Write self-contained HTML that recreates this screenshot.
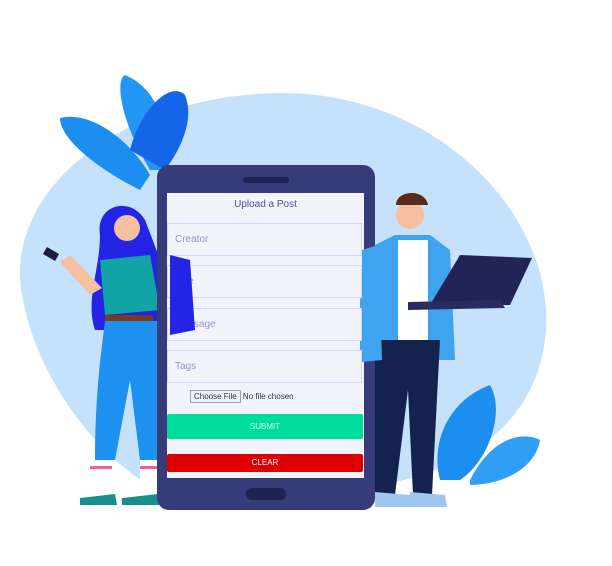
<!DOCTYPE html>
<html><head><meta charset="utf-8"><style>
html,body{margin:0;padding:0;background:#fff;width:612px;height:566px;overflow:hidden;font-family:"Liberation Sans",sans-serif}
.abs{position:absolute}
.f{position:absolute;left:167px;width:195px;background:#f2f4fb;border:1px solid #cfd6f5;box-sizing:border-box;color:#8f97c9;font-size:10px;padding-left:7px}
</style></head><body>
<svg class="abs" style="left:0;top:0" width="612" height="566">
<path d="M20 280 C15 180 130 95 280 93 C440 92 560 220 545 340 C535 420 470 470 380 485 L160 490 C110 470 30 380 20 280Z" fill="#c5e1fb"/>
<path d="M140 190 C100 170 60 140 60 118 C90 110 130 140 150 175Z" fill="#1c8ef0"/>
<path d="M150 170 C120 120 115 80 125 75 C160 90 170 130 160 170Z" fill="#2196f3"/>
<path d="M130 150 C140 110 170 80 185 95 C195 120 180 150 165 170Z" fill="#1565e8"/>
<path d="M440 480 C430 440 450 400 490 385 C505 410 490 460 460 480Z" fill="#1c8ef0"/>
<path d="M470 480 C490 440 520 430 540 440 C535 470 500 485 470 485Z" fill="#2f9ef4"/>
<path d="M100 235 C95 205 130 195 145 220 C160 260 175 290 165 330 L95 330 C85 300 100 270 100 235Z" fill="#2424e6"/>
<circle cx="127" cy="228" r="13" fill="#f5c0a0"/>
<path d="M100 260 L150 255 L160 310 L105 315Z" fill="#11a3a6"/>
<rect x="105" y="315" width="48" height="6" fill="#7a3a20"/>
<path d="M105 321 L160 321 L158 460 L140 460 L130 380 L115 460 L95 460 C95 400 100 360 105 321Z" fill="#1e90f0"/>
<rect x="90" y="460" width="22" height="28" fill="#fff"/><rect x="140" y="460" width="20" height="28" fill="#fff"/>
<rect x="90" y="466" width="22" height="3" fill="#ef5fa6"/><rect x="140" y="466" width="20" height="3" fill="#ef5fa6"/>
<path d="M80 498 L115 494 L117 505 L80 505Z" fill="#178f8f"/><path d="M122 498 L158 494 L160 505 L122 505Z" fill="#178f8f"/>
<path d="M60 262 L90 295 L102 288 L70 255Z" fill="#f5c0a0"/>
<rect x="44" y="250" width="14" height="8" fill="#1c1c40" transform="rotate(30 51 254)"/>
<rect x="157" y="165" width="218" height="345" rx="12" fill="#363b7a"/>
<rect x="243" y="177" width="46" height="6" rx="3" fill="#1f2352"/>
<rect x="246" y="488" width="40" height="12" rx="6" fill="#1f2352"/>
<rect x="167" y="193" width="197" height="285" fill="#f2f4fb"/>
<circle cx="410" cy="215" r="14" fill="#f5c0a0"/>
<path d="M396 205 C396 190 425 188 428 205Z" fill="#5a2a1a"/>
<path d="M375 245 L395 235 L430 235 L450 250 L455 360 L360 360 L360 300Z" fill="#3fa3f0"/>
<rect x="398" y="240" width="30" height="100" fill="#fff"/>
<path d="M375 340 L440 340 L432 495 L413 495 L408 390 L395 495 L375 495Z" fill="#14234d"/>
<path d="M375 492 L410 495 L412 507 L375 507Z" fill="#9fc6ef"/><path d="M410 492 L445 495 L447 507 L410 507Z" fill="#9fc6ef"/>
<path d="M460 255 L532 258 L510 305 L430 305Z" fill="#222455"/>
<path d="M408 302 L500 300 L505 308 L408 310Z" fill="#2a2c60"/>
</svg>
<div class="abs" style="left:167px;top:199px;width:197px;text-align:center;font-size:10px;color:#4a5296">Upload a Post</div>
<div class="f" style="top:223px;height:33px;line-height:31px">Creator</div>
<div class="f" style="top:265px;height:33px;line-height:31px">Title</div>
<div class="f" style="top:308px;height:33px;line-height:31px">Message</div>
<div class="f" style="top:350px;height:33px;line-height:31px">Tags</div>
<div class="abs" style="left:190px;top:392px;font-size:8px;color:#333"><span style="border:1px solid #9aa2d6;background:#eef0fa;padding:1px 3px">Choose File</span> No file chosen</div>
<div class="abs" style="left:167px;top:414px;width:196px;height:25px;background:#00dc9c;color:#c9fff0;font-size:8px;text-align:center;line-height:25px;border-radius:2px">SUBMIT</div>
<div class="abs" style="left:167px;top:454px;width:196px;height:18px;background:#de0000;color:#fff;font-size:8px;text-align:center;line-height:18px;border-radius:2px">CLEAR</div>
<svg class="abs" style="left:0;top:0" width="612" height="566">
<path d="M170 255 L190 260 L195 330 L170 335Z" fill="#2424e6"/>
<path d="M362 250 L378 245 L382 360 L362 362Z" fill="#3fa3f0"/>
</svg>
</body></html>
